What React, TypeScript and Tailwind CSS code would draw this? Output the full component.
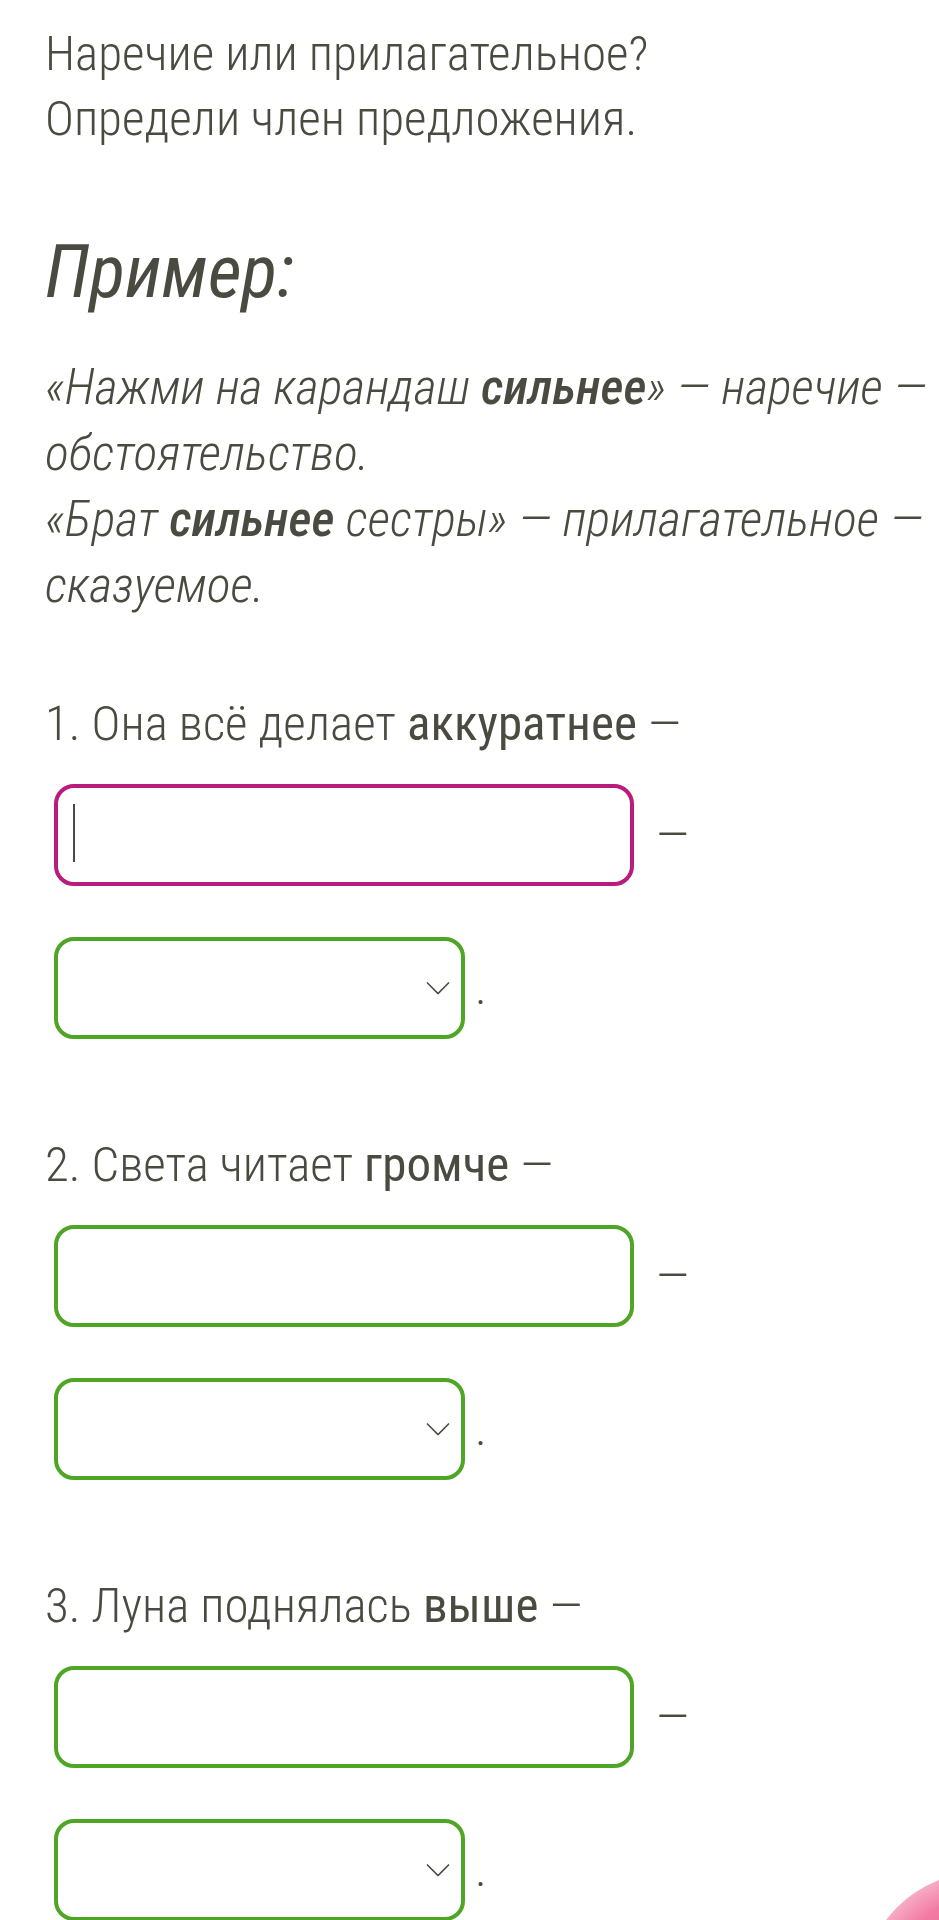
import { ChangeEvent, useState } from "react";

const questions = [
   { id: 1, text: "1. Она всё делает ", word: "аккуратнее", active: true },
   { id: 2, text: "2. Света читает ", word: "громче", active: false },
   { id: 3, text: "3. Луна поднялась ", word: "выше", active: false },
];

const Chevron = () => (
   <svg
      className="pointer-events-none absolute right-[15px] top-1/2 -translate-y-1/2"
      width="24"
      height="13"
      viewBox="0 0 24 13"
      fill="none"
   >
      <polyline points="1,1 12,12 23,1" stroke="#4b4b45" strokeWidth="1.6" />
   </svg>
);

const Question = ({ q, first }: { q: (typeof questions)[number]; first: boolean }) => {
   const [value, setValue] = useState("");
   const [part, setPart] = useState("");

   return (
      <div className={first ? "mt-[73px]" : "mt-[93px]"}>
         <p className="text-[49px] leading-[66px]">
            {q.text}
            <span className="font-normal">{q.word}</span> —
         </p>

         <div className="mt-[27px] ml-[9px] flex items-center gap-[22px]">
            <div className="relative">
               <input
                  value={value}
                  onChange={(e: ChangeEvent<HTMLInputElement>) => setValue(e.target.value)}
                  className={`h-[102px] w-[580px] rounded-[20px] border-[4px] bg-white px-[15px] text-[48px] outline-none ${
                     q.active ? "border-[#b81c7c]" : "border-[#4fa526]"
                  }`}
               />
               {q.active && (
                  <span className="absolute left-[19px] top-[20px] h-[58px] w-[2px] bg-[#4b4b45]" />
               )}
            </div>
            <span className="text-[49px] leading-[66px]">—</span>
         </div>

         <div className="mt-[51px] ml-[9px] flex items-center gap-[10px]">
            <div className="relative">
               <select
                  value={part}
                  onChange={(e) => setPart(e.target.value)}
                  className="h-[102px] w-[411px] appearance-none rounded-[20px] border-[4px] border-[#4fa526] bg-white px-[15px] text-[40px] outline-none"
               >
                  <option value=""></option>
                  <option value="adv">наречие</option>
                  <option value="adj">прилагательное</option>
               </select>
               <Chevron />
            </div>
            <span className="text-[49px] leading-[66px]">.</span>
         </div>
      </div>
   );
};

const App = () => {
   return (
      <div className="relative h-[1920px] overflow-hidden bg-white pl-[45px] pr-[8px] font-['Roboto',sans-serif] font-light font-stretch-condensed text-[#4a4a40]">
         <div className="pt-[21px] text-[49px] leading-[65px]">
            <p>Наречие или прилагательное?</p>
            <p>Определи член предложения.</p>
         </div>

         <h2 className="mt-[80px] text-[74px] leading-[82px] font-normal italic">Пример:</h2>

         <p className="mt-[41px] whitespace-nowrap text-[50px] leading-[66px] italic">
            «Нажми на карандаш <b className="font-medium">сильнее</b>» — наречие —
            <br />
            обстоятельство.
            <br />
            «Брат <b className="font-medium">сильнее</b> сестры» — прилагательное —
            <br />
            сказуемое.
         </p>

         {questions.map((q, i) => (
            <Question key={q.id} q={q} first={i === 0} />
         ))}

         <div className="absolute left-[862px] top-[1872px] h-[240px] w-[240px] rounded-full bg-[radial-gradient(circle_at_50%_50%,#ee5f8f_0%,#f27aa2_55%,#f8c3d4_78%,#fde9ef_90%,rgba(255,255,255,0)_100%)]" />
      </div>
   );
};

export default App;
